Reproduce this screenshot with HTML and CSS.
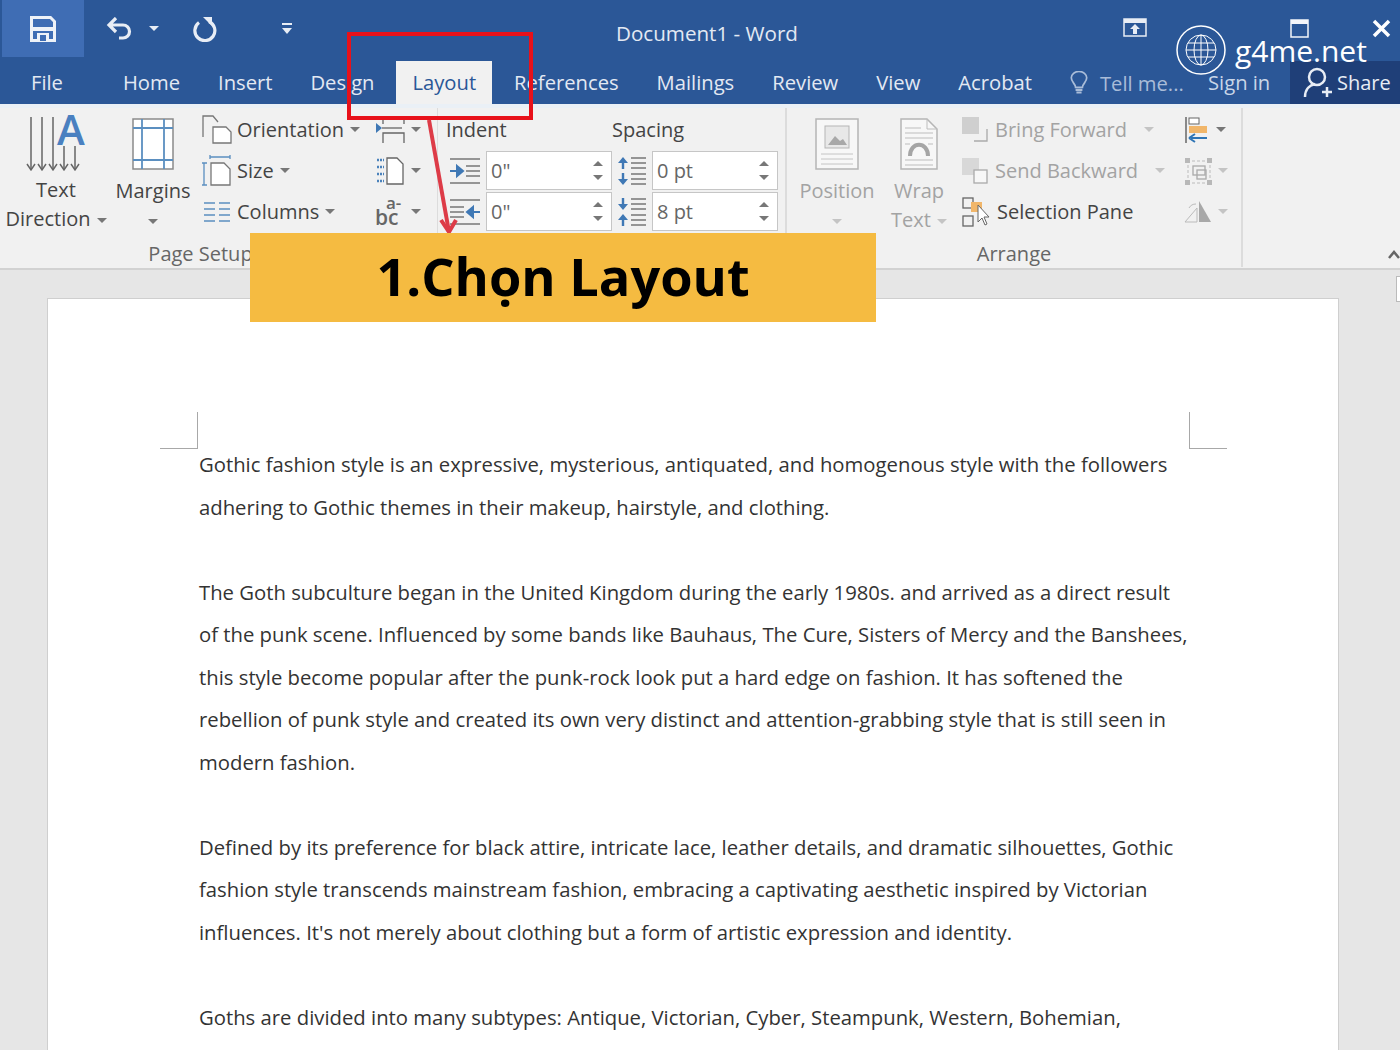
FILE: index.html
```html
<!DOCTYPE html>
<html lang="en">
<head>
  <meta charset="UTF-8"/>
  <title>Document1 - Word</title>
  <link rel="stylesheet" href="styles.css">
</head>
<body>
  <div class="window">
    <header class="titlebar">
      <div class="qat">
        <div class="qat-save">
          <svg width="26" height="26" viewBox="0 0 26 26"><path d="M1.500 1.500h19l4 4v19h-23z" fill="#3f6db4" stroke="#eef2f8" stroke-width="3"/><rect x="3" y="11" width="20" height="4" fill="#eef2f8"/><rect x="7" y="17" width="12" height="8" fill="#eef2f8"/><rect x="10" y="19" width="6" height="6" fill="#3f6db4"/></svg>
        </div>
        <svg class="qat-undo" width="28" height="24" viewBox="0 0 28 24"><path d="M4 8h13a6.500 6.500 0 0 1 0 13h-4M10 1 3 8l7 7" fill="none" stroke="#e8edf5" stroke-width="3.200"/></svg>
        <span class="caret caret-light"></span>
        <svg class="qat-redo" width="26" height="26" viewBox="0 0 26 26"><path d="M8 6.500A10 10 0 1 0 18 5.500" fill="none" stroke="#e8edf5" stroke-width="3.200"/><path d="M12 1h9v9z" fill="#e8edf5"/></svg>
        <svg class="qat-more" width="12" height="14" viewBox="0 0 12 14"><rect x="1" y="1" width="10" height="2" fill="#e8edf5"/><path d="M1 6h10l-5 6z" fill="#e8edf5"/></svg>
      </div>
      <div class="doc-title">Document1 - Word</div>
      <div class="win-controls">
        <svg class="win-restore" width="24" height="20" viewBox="0 0 24 20"><rect x="1" y="1" width="22" height="17" fill="none" stroke="#e8edf5" stroke-width="1.500"/><rect x="1" y="1" width="22" height="4" fill="#e8edf5"/><path d="M12 6l5 5h-3v5h-4v-5H7z" fill="#e8edf5"/></svg>
        <svg class="win-max" width="19" height="19" viewBox="0 0 19 19"><rect x="1" y="1" width="17" height="17" fill="none" stroke="#f4f6fa" stroke-width="1.500"/><rect x="1" y="1" width="17" height="4" fill="#f4f6fa"/></svg>
        <svg class="win-close" width="19" height="19" viewBox="0 0 19 19"><path d="M2 2l15 15M17 2 2 17" stroke="#fff" stroke-width="3.500"/></svg>
      </div>
    </header>

    <nav class="tabs">
      <a class="tab tab-file">File</a>
      <a class="tab">Home</a>
      <a class="tab">Insert</a>
      <a class="tab">Design</a>
      <a class="tab tab-active">Layout</a>
      <a class="tab">References</a>
      <a class="tab">Mailings</a>
      <a class="tab">Review</a>
      <a class="tab">View</a>
      <a class="tab">Acrobat</a>
      <div class="tell">
        <svg width="18" height="24" viewBox="0 0 20 28"><path d="M6 19c0-4-5-6-5-11a9 7.500 0 0 1 18 0c0 5-5 7-5 11z" fill="none" stroke="#a9bcd8" stroke-width="2"/><path d="M6 22h8M7 25h6" stroke="#a9bcd8" stroke-width="2.400"/></svg>
        <span>Tell me...</span>
      </div>
      <a class="tab tab-sign">Sign in</a>
      <div class="share">
        <svg width="30" height="32" viewBox="0 0 30 32"><circle cx="14" cy="10" r="8" fill="none" stroke="#e8edf5" stroke-width="2.500"/><path d="M2 30c0-8 5-12 10-13M19 25h10M24 20v10" fill="none" stroke="#e8edf5" stroke-width="2.500"/></svg>
        <span>Share</span>
      </div>
    </nav>

    <div class="ribbon">
      <section class="group group-page">
        <div class="group-body">
          <div class="big-btn btn-direction">
            <svg width="72" height="71" viewBox="0 -11 72 71"><path d="M5 3v52M16 3v52M27 3v52M38 32v23M49 32v23" stroke="#666" stroke-width="1.500"/><path d="M1 50l4 6 4-6M12 50l4 6 4-6M23 50l4 6 4-6M34 50l4 6 4-6M45 50l4 6 4-6" fill="none" stroke="#666" stroke-width="1.500"/><text x="31" y="31" class="icon-a">A</text></svg>
            <span class="big-label">Text</span>
            <span class="big-label">Direction<i class="caret"></i></span>
          </div>
          <div class="big-btn btn-margins">
            <svg width="42" height="52" viewBox="0 0 42 52"><rect x="1" y="1" width="40" height="50" fill="#fff" stroke="#8a8a8a" stroke-width="1.500"/><path d="M10 1v50M32 1v50M1 10h40M1 42h40" stroke="#5b8fc0" stroke-width="1.800"/></svg>
            <span class="big-label">Margins</span>
            <span class="big-label"><i class="caret caret-solo"></i></span>
          </div>
          <div class="small-col col-setup">
            <div class="small-btn">
              <svg width="30" height="30" viewBox="0 0 30 30"><path d="M1 22V1h10l5 6" fill="none" stroke="#777" stroke-width="1.300"/><path d="M11 12h13l5 5v11H11z" fill="#fff" stroke="#777" stroke-width="1.300"/></svg>
              <span>Orientation</span><i class="caret"></i>
            </div>
            <div class="small-btn">
              <svg width="30" height="32" viewBox="0 0 30 32"><path d="M2 8v22M0 8h5M0 30h5M8 2h20M8 0v4M28 0v4" fill="none" stroke="#5b8fc0" stroke-width="1.300"/><path d="M9 8h13l6 6v16H9z" fill="#fff" stroke="#777" stroke-width="1.300"/></svg>
              <span>Size</span><i class="caret"></i>
            </div>
            <div class="small-btn">
              <svg width="30" height="22" viewBox="0 0 30 22"><path d="M2 2h11M2 8h11M2 14h11M2 20h11M17 2h11M17 8h11M17 14h11M17 20h11" stroke="#5b8fc0" stroke-width="1.600"/></svg>
              <span>Columns</span><i class="caret"></i>
            </div>
          </div>
          <div class="small-col col-tiny">
            <div class="small-btn">
              <svg width="30" height="28" viewBox="0 0 30 28"><path d="M8 8V3h21v5M8 27V17h21v10" fill="none" stroke="#666" stroke-width="1.300"/><path d="M7 12H27" stroke="#666" stroke-width="1.300"/><path d="M1 7l6 5-6 5z" fill="#3f78b5"/></svg>
              <i class="caret"></i>
            </div>
            <div class="small-btn">
              <svg width="30" height="30" viewBox="0 0 30 30"><path d="M2 4h7M2 11h7M2 18h7M2 25h7" stroke="#4b82bb" stroke-width="2.600" stroke-dasharray="2 1"/><path d="M12 2h10l6 6v20H12z" fill="#fff" stroke="#666" stroke-width="1.300"/></svg>
              <i class="caret"></i>
            </div>
            <div class="small-btn">
              <span class="hyphen"><span class="hyphen-top">a-</span><span class="hyphen-low">bc</span></span>
              <i class="caret"></i>
            </div>
          </div>
        </div>
        <div class="group-label label-page">Page Setup</div>
      </section>

      <section class="group group-para">
        <div class="para-head">
          <span class="para-indent">Indent</span>
          <span>Spacing</span>
        </div>
        <div class="para-row">
          <svg width="32" height="26" viewBox="0 0 32 26"><path d="M1 1h30M17 8h14M17 13h14M17 18h14M1 25h30" stroke="#777" stroke-width="1.500"/><path d="M1 13h8M8 8l6 5-6 5z" fill="#3f78b5" stroke="#3f78b5" stroke-width="2"/></svg>
          <div class="spin"><span>0"</span><div class="spin-arrows"><i></i><i></i></div></div>
          <svg width="30" height="30" viewBox="0 0 30 30"><path d="M14 2h15M14 7h15M14 12h15M14 18h15M14 23h15M14 28h15" stroke="#777" stroke-width="1.500"/><path d="M6 5v8M6 17v9" stroke="#3f78b5" stroke-width="2.400"/><path d="M1 7l5-6 5 6zM1 23l5 6 5-6z" fill="#3f78b5"/></svg>
          <div class="spin"><span>0 pt</span><div class="spin-arrows"><i></i><i></i></div></div>
        </div>
        <div class="para-row">
          <svg width="32" height="26" viewBox="0 0 32 26"><path d="M1 1h30M1 8h14M1 13h14M1 18h14M1 25h30" stroke="#777" stroke-width="1.500"/><path d="M31 13h-8M24 8l-6 5 6 5z" fill="#3f78b5" stroke="#3f78b5" stroke-width="2"/></svg>
          <div class="spin"><span>0"</span><div class="spin-arrows"><i></i><i></i></div></div>
          <svg width="30" height="30" viewBox="0 0 30 30"><path d="M14 2h15M14 7h15M14 12h15M14 18h15M14 23h15M14 28h15" stroke="#777" stroke-width="1.500"/><path d="M6 1v8M6 21v8" stroke="#3f78b5" stroke-width="2.400"/><path d="M1 7l5 6 5-6zM1 23l5-6 5 6z" fill="#3f78b5"/></svg>
          <div class="spin"><span>8 pt</span><div class="spin-arrows"><i></i><i></i></div></div>
        </div>
      </section>

      <section class="group group-arrange">
        <div class="group-body">
          <div class="big-btn btn-position off">
            <svg width="44" height="52" viewBox="0 0 44 52"><rect x="1" y="1" width="42" height="50" fill="#f7f7f7" stroke="#b5b5b5" stroke-width="1.500"/><rect x="10" y="8" width="24" height="22" fill="#e8e8e8" stroke="#b5b5b5"/><path d="M13 27l7-9 5 5 3-2 4 6z" fill="#a8a8a8"/><path d="M6 36h32M6 41h32M6 46h32" stroke="#c4c4c4"/></svg>
            <span class="big-label">Position</span>
            <span class="big-label"><i class="caret caret-solo"></i></span>
          </div>
          <div class="big-btn btn-wrap off">
            <svg width="38" height="52" viewBox="0 0 38 52"><path d="M1 1h26l10 10v40H1z" fill="#f7f7f7" stroke="#b5b5b5" stroke-width="1.500"/><path d="M27 1v10h10M5 10h16M5 15h28M5 20h28M5 42h28M5 47h28M5 26h5M28 26h5" fill="none" stroke="#bdbdbd"/><path d="M10 38c0-15 18-15 18 0" fill="none" stroke="#a5a5a5" stroke-width="4"/></svg>
            <span class="big-label">Wrap</span>
            <span class="big-label">Text<i class="caret"></i></span>
          </div>
          <div class="small-col col-arrange">
            <div class="small-btn off">
              <svg width="26" height="26" viewBox="0 0 26 26"><rect x="0" y="0" width="17" height="17" fill="#cfcfcf"/><path d="M12 24h13V12" fill="none" stroke="#aaa" stroke-width="1.300"/></svg>
              <span>Bring Forward</span><i class="caret caret-far"></i>
            </div>
            <div class="small-btn off">
              <svg width="26" height="26" viewBox="0 0 26 26"><rect x="0" y="0" width="17" height="17" fill="#d8d8d8"/><rect x="12" y="12" width="13" height="13" fill="#f7f7f7" stroke="#aaa" stroke-width="1.300"/></svg>
              <span>Send Backward</span><i class="caret caret-far"></i>
            </div>
            <div class="small-btn">
              <svg width="28" height="30" viewBox="0 0 28 30"><rect x="1" y="1" width="10" height="10" fill="none" stroke="#666" stroke-width="1.300"/><rect x="1" y="19" width="10" height="10" fill="none" stroke="#666" stroke-width="1.300"/><rect x="9" y="5" width="11" height="10" fill="#f1b66a"/><path d="M16 8v17l4-4 3 7 2-1-3-7h5z" fill="#fff" stroke="#666"/></svg>
              <span class="pane-label">Selection Pane</span>
            </div>
          </div>
          <div class="small-col col-align">
            <div class="small-btn">
              <svg width="26" height="28" viewBox="0 0 26 28"><path d="M2 1v26" stroke="#666" stroke-width="1.500"/><rect x="5" y="2" width="10" height="6" fill="#fff" stroke="#666"/><rect x="5" y="10" width="18" height="7" fill="#f1b66a"/><path d="M7 22h16M5 22l6-4M5 22l6 4" fill="none" stroke="#2f75b5" stroke-width="2"/></svg>
              <i class="caret"></i>
            </div>
            <div class="small-btn off">
              <svg width="28" height="28" viewBox="0 0 28 28"><path d="M8 4h18M4 8v16M8 26h18M26 8v16" stroke="#bbb" stroke-dasharray="3 2" fill="none"/><rect x="9" y="9" width="12" height="9" fill="none" stroke="#aaa" stroke-width="1.300"/><rect x="13" y="13" width="9" height="9" fill="none" stroke="#aaa" stroke-width="1.300"/><path d="M1 1h5v5H1zM23 1h5v5h-5zM1 23h5v5H1zM23 23h5v5h-5z" fill="#b8b8b8"/></svg>
              <i class="caret"></i>
            </div>
            <div class="small-btn off">
              <svg width="28" height="24" viewBox="0 0 28 24"><path d="M1 22l12-14v14z" fill="#f1f1f1" stroke="#bbb"/><path d="M15 1v21h12z" fill="#a8a8a8"/><path d="M5 8a8 8 0 0 1 7-4" fill="none" stroke="#bbb"/></svg>
              <i class="caret"></i>
            </div>
          </div>
        </div>
        <div class="group-label">Arrange</div>
      </section>
      <svg class="collapse" width="12" height="9" viewBox="0 0 12 9"><path d="M1 8l5-6 5 6" fill="none" stroke="#666" stroke-width="2.500"/></svg>
    </div>

    <main class="doc-area">
      <article class="page">
        <span class="crop crop-left"></span>
        <span class="crop crop-right"></span>
        <p>Gothic fashion style is an expressive, mysterious, antiquated, and homogenous style with the followers<br>adhering to Gothic themes in their makeup, hairstyle, and clothing.</p>
        <p>The Goth subculture began in the United Kingdom during the early 1980s. and arrived as a direct result<br>of the punk scene. Influenced by some bands like Bauhaus, The Cure, Sisters of Mercy and the Banshees,<br>this style become popular after the punk-rock look put a hard edge on fashion. It has softened the<br>rebellion of punk style and created its own very distinct and attention-grabbing style that is still seen in<br>modern fashion.</p>
        <p>Defined by its preference for black attire, intricate lace, leather details, and dramatic silhouettes, Gothic<br>fashion style transcends mainstream fashion, embracing a captivating aesthetic inspired by Victorian<br>influences. It's not merely about clothing but a form of artistic expression and identity.</p>
        <p>Goths are divided into many subtypes: Antique, Victorian, Cyber, Steampunk, Western, Bohemian,</p>
      </article>
      <div class="scroll-stub"></div>
    </main>
  </div>

  <!-- annotations over the screenshot -->
  <div class="red-box"></div>
  <svg class="red-arrow" width="40" height="125" viewBox="0 0 40 125"><path d="M9 2l20 112" stroke="#dd3b47" stroke-width="4" fill="none"/><path d="M21 102l8 12 7-12" stroke="#dd3b47" stroke-width="4" fill="none"/></svg>
  <div class="callout">1.Chọn Layout</div>
  <div class="watermark">
    <svg width="52" height="52" viewBox="0 0 52 52"><circle cx="26" cy="26" r="24" fill="none" stroke="#fff" stroke-width="1.500"/><circle cx="26" cy="26" r="15" fill="none" stroke="#fff"/><ellipse cx="26" cy="26" rx="7" ry="15" fill="none" stroke="#fff"/><path d="M26 11v30M11 26h30M13 19h26M13 33h26" stroke="#fff"/></svg>
    <span>g4me.net</span>
  </div>
</body>
</html>
```

FILE: styles.css
```css
* { box-sizing: border-box; }
html, body { margin: 0; height: 100%; overflow: hidden; }
body {
  position: relative;
  font-family: "Open Sans", "Noto Sans", sans-serif;
  background: #e6e6e6;
  color: #444;
}
.window { height: 1050px; display: flex; flex-direction: column; }

/* title bar */
.titlebar {
  height: 61px;
  background: #2b5797;
  display: flex;
  align-items: flex-start;
  position: relative;
  flex: none;
}
.qat { display: flex; align-items: center; height: 57px; padding-left: 2px; }
.qat-save {
  width: 82px;
  height: 57px;
  background: #3f6db4;
  display: flex;
  align-items: center;
  justify-content: center;
}
.qat-undo { margin-left: 22px; }
.qat-redo { margin-left: 32px; }
.qat-more { margin-left: 64px; }
.doc-title {
  position: absolute;
  left: 0;
  right: -14px;
  top: 19px;
  text-align: center;
  font-size: 20.6px;
  line-height: 28px;
  color: #e3e9f3;
}
.win-controls { margin-left: auto; display: flex; align-items: center; height: 56px; padding-right: 9px; }
.win-max { margin-left: 143px; }
.win-close { margin-left: 63px; }

/* tabs */
.tabs {
  height: 43px;
  background: #2b5797;
  display: flex;
  align-items: stretch;
  gap: 6px;
  flex: none;
  padding-left: 15px;
  font-size: 20.2px;
}
.tab {
  padding: 0 16px;
  color: #e3e9f3;
  line-height: 42px;
  white-space: nowrap;
}
.tab-file { margin-right: 22px; }
.tab-active { background: #f1f1f1; color: #2b5797; }
.tell { display: flex; align-items: center; gap: 12px; margin-left: 16px; color: #a9bcd8; width: 130px; }
.tab-sign { position: absolute; left: 1192px; color: #c9d6e8; }
.share {
  margin-left: auto;
  width: 110px;
  background: #1f3f78;
  color: #e8edf5;
  display: flex;
  align-items: center;
  gap: 4px;
  padding-left: 13px;
  font-size: 20px;
}

/* ribbon */
.ribbon {
  height: 166px;
  flex: none;
  display: flex;
  position: relative;
  background: #f1f1f1;
  border-top: 4px solid #eaf0f6;
  border-bottom: 2px solid #d2d2d2;
  font-size: 20px;
}
.group { border-right: 2px solid #dcdcdc; margin-bottom: 1px; display: flex; flex-direction: column; position: relative; }
.group-page { width: 438px; border-right-width: 1px; }
.group-para { width: 349px; }
.group-arrange { width: 456px; }
.group-body { display: flex; flex: 1; }
.group-label { text-align: center; line-height: 26px; height: 26px; font-size: 20px; color: #666; }
.label-page { padding-right: 36px; }

.big-btn { display: flex; flex-direction: column; align-items: center; }
.big-label { line-height: 29px; height: 29px; white-space: nowrap; }
.btn-direction { width: 112px; padding-top: 6px; }
.btn-direction svg { align-self: flex-start; margin: -11px 0 1px 26px; }
.btn-margins { width: 86px; margin-left: -2px; padding-top: 10px; }
.btn-margins svg { margin-bottom: 6px; }
.btn-position { width: 100px; padding-top: 10px; }
.btn-position svg { margin-bottom: 6px; }
.btn-wrap { width: 64px; padding-top: 10px; }
.btn-wrap svg { margin-bottom: 6px; }
.off { color: #a3a3a3; }
.icon-a { font: 600 42px "Open Sans", sans-serif; fill: #4a80c0; }

.small-col { display: flex; flex-direction: column; padding-top: 1px; }
.small-btn { height: 41px; display: flex; align-items: center; white-space: nowrap; }
.small-btn svg { flex: none; }
.small-btn span { margin-left: 5px; }
.col-setup { width: 173px; margin-left: 6px; }
.col-tiny { width: 62px; }
.col-arrange { width: 222px; margin-left: 11px; }
.col-arrange .small-btn span { margin-left: 7px; }
.col-arrange .pane-label { margin-left: 5px; color: #444; }
.col-align { width: 50px; }

.caret {
  display: inline-block;
  width: 0;
  height: 0;
  margin-left: 6px;
  border-left: 5px solid transparent;
  border-right: 5px solid transparent;
  border-top: 5px solid #777;
  vertical-align: middle;
}
.off .caret { border-top-color: #c4c4c4; }
.caret-solo { margin-left: 0; }
.caret-far { margin-left: 17px; }
.caret-light { border-top-color: #e8edf5; margin-left: 15px; }

.small-btn .hyphen {
  position: relative;
  margin-left: 0;
  width: 30px;
  height: 30px;
  color: #666;
  font-weight: 600;
}
.small-btn .hyphen span { position: absolute; margin: 0; }
.hyphen-top { left: 11px; top: 0; font-size: 17px; line-height: 12px; }
.hyphen-low { left: 0; top: 12px; font-size: 21px; line-height: 16px; }

/* paragraph */
.group-para { padding-left: 8px; }
.para-head { display: flex; height: 42px; align-items: center; }
.para-indent { width: 166px; }
.para-row { display: flex; align-items: center; height: 41px; margin-top: 0; }
.para-row > svg:first-child { margin-left: 3px; }
.para-row > svg:nth-child(3) { margin: 0 5px; }
.spin {
  width: 126px;
  height: 39px;
  margin-left: 5px;
  display: flex;
  align-items: center;
  justify-content: space-between;
  background: #fff;
  border: 1px solid #c6c6c6;
  padding: 0 8px 0 4px;
  color: #666;
}
.para-row > svg:nth-child(3) + .spin { margin-left: 0; }
.spin-arrows { display: flex; flex-direction: column; gap: 9px; }
.spin-arrows i {
  width: 0;
  height: 0;
  border-left: 5px solid transparent;
  border-right: 5px solid transparent;
  border-bottom: 5px solid #777;
}
.spin-arrows i + i { border-bottom: 0; border-top: 5px solid #777; }

.collapse { position: absolute; right: 0; top: 142px; }

/* document */
.doc-area { flex: 1; position: relative; padding: 28px 0 0 47px; overflow: hidden; }
.page {
  position: relative;
  width: 1292px;
  height: 900px;
  background: #fff;
  border: 1px solid #cfcfcf;
  padding: 144px 0 0 151px;
  font-size: 20.3px;
  line-height: 42.55px;
  color: #333;
  white-space: nowrap;
}
.page p { margin: 0 0 42.55px; }
.crop { position: absolute; top: 113px; width: 38px; height: 37px; border-bottom: 1px solid #a8a8a8; }
.crop-left { left: 112px; border-right: 1px solid #a8a8a8; }
.crop-right { left: 1141px; border-left: 1px solid #a8a8a8; }
.scroll-stub { position: absolute; right: -2px; top: 6px; width: 6px; height: 26px; border: 1px solid #bbb; background: #fff; }

/* annotations */
.red-box { position: absolute; left: 347px; top: 32px; width: 186px; height: 88px; border: 4px solid #e8111a; }
.red-arrow { position: absolute; left: 420px; top: 118px; }
.callout {
  position: absolute;
  left: 250px;
  top: 233px;
  width: 626px;
  height: 89px;
  background: #f5bb41;
  color: #000;
  font-weight: 700;
  font-size: 52.3px;
  line-height: 85px;
  text-align: center;
}
.watermark {
  position: absolute;
  left: 1175px;
  top: 24px;
  display: flex;
  align-items: center;
  gap: 8px;
  color: #fff;
  font-size: 30px;
}
```
